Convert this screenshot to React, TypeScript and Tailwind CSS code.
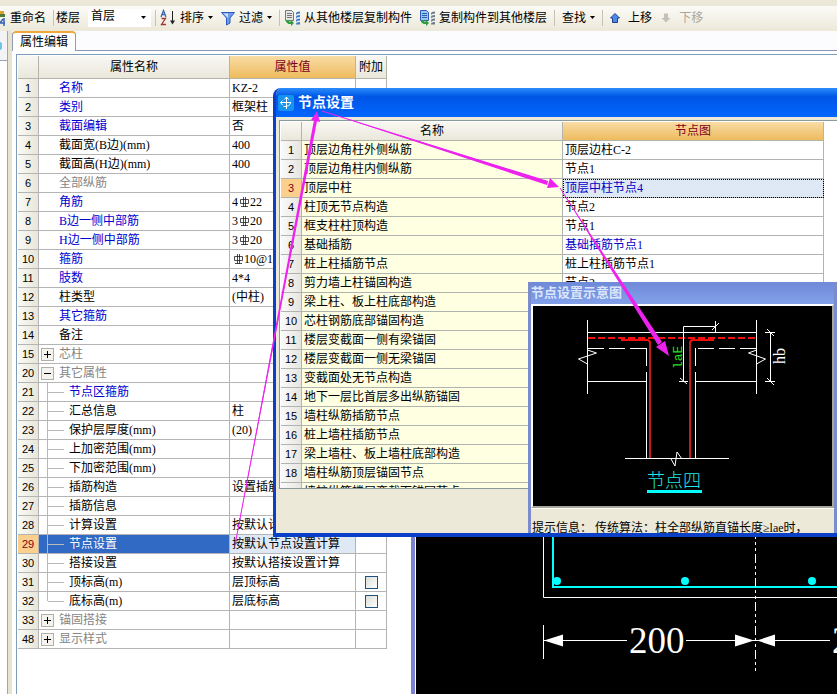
import type { ReactNode } from "react";
import clsx from "clsx";

type PropertyRow = {
  no: number;
  name: string;
  value?: ReactNode;
  tone?: "blue" | "gray";
  kind?: "group-open" | "group-closed" | "child" | "last-child";
  selected?: boolean;
  check?: boolean;
};

function Rebar() {
  return (
    <svg
      viewBox="0 0 12 12"
      className="inline-block size-3 align-[-2px]"
      fill="none"
      stroke="#222"
    >
      <path d="M5.500 1v10M7.500 1v10M2.500 3.500h8v4h-8zM3 10.500h7" strokeWidth="0.8" />
    </svg>
  );
}

const properties: PropertyRow[] = [
  { no: 1, name: "名称", value: "KZ-2", tone: "blue" },
  { no: 2, name: "类别", value: "框架柱", tone: "blue" },
  { no: 3, name: "截面编辑", value: "否", tone: "blue" },
  { no: 4, name: "截面宽(B边)(mm)", value: "400" },
  { no: 5, name: "截面高(H边)(mm)", value: "400" },
  { no: 6, name: "全部纵筋", tone: "gray" },
  { no: 7, name: "角筋", value: <>4<Rebar />22</>, tone: "blue" },
  { no: 8, name: "B边一侧中部筋", value: <>3<Rebar />20</>, tone: "blue" },
  { no: 9, name: "H边一侧中部筋", value: <>3<Rebar />20</>, tone: "blue" },
  { no: 10, name: "箍筋", value: <><Rebar />10@100</>, tone: "blue" },
  { no: 11, name: "肢数", value: "4*4", tone: "blue" },
  { no: 12, name: "柱类型", value: "(中柱)" },
  { no: 13, name: "其它箍筋", tone: "blue" },
  { no: 14, name: "备注" },
  { no: 15, name: "芯柱", tone: "gray", kind: "group-closed" },
  { no: 20, name: "其它属性", tone: "gray", kind: "group-open" },
  { no: 21, name: "节点区箍筋", tone: "blue", kind: "child" },
  { no: 22, name: "汇总信息", value: "柱", kind: "child" },
  { no: 23, name: "保护层厚度(mm)", value: "(20)", kind: "child" },
  { no: 24, name: "上加密范围(mm)", kind: "child" },
  { no: 25, name: "下加密范围(mm)", kind: "child" },
  { no: 26, name: "插筋构造", value: "设置插筋", kind: "child" },
  { no: 27, name: "插筋信息", kind: "child" },
  { no: 28, name: "计算设置", value: "按默认计算设置计算", kind: "child" },
  {
    no: 29,
    name: "节点设置",
    value: "按默认节点设置计算",
    kind: "child",
    selected: true,
  },
  { no: 30, name: "搭接设置", value: "按默认搭接设置计算", kind: "child" },
  { no: 31, name: "顶标高(m)", value: "层顶标高", kind: "child", check: true },
  {
    no: 32,
    name: "底标高(m)",
    value: "层底标高",
    kind: "last-child",
    check: true,
  },
  { no: 33, name: "锚固搭接", tone: "gray", kind: "group-closed" },
  { no: 48, name: "显示样式", tone: "gray", kind: "group-closed" },
];

const nodes: { name: string; value?: string; blue?: boolean }[] = [
  { name: "顶层边角柱外侧纵筋", value: "顶层边柱C-2" },
  { name: "顶层边角柱内侧纵筋", value: "节点1" },
  { name: "顶层中柱", value: "顶层中柱节点4", blue: true },
  { name: "柱顶无节点构造", value: "节点2" },
  { name: "框支柱柱顶构造", value: "节点1" },
  { name: "基础插筋", value: "基础插筋节点1", blue: true },
  { name: "桩上柱插筋节点", value: "桩上柱插筋节点1" },
  { name: "剪力墙上柱锚固构造", value: "节点2" },
  { name: "梁上柱、板上柱底部构造" },
  { name: "芯柱钢筋底部锚固构造" },
  { name: "楼层变截面一侧有梁锚固" },
  { name: "楼层变截面一侧无梁锚固" },
  { name: "变截面处无节点构造" },
  { name: "地下一层比首层多出纵筋锚固" },
  { name: "墙柱纵筋插筋节点" },
  { name: "桩上墙柱插筋节点" },
  { name: "梁上墙柱、板上墙柱底部构造" },
  { name: "墙柱纵筋顶层锚固节点" },
  { name: "墙柱纵筋楼层变截面锚固节点" },
];

function Separator() {
  return <span className="h-4 w-px shrink-0 bg-[#c5c2b4]" />;
}

function Caret() {
  return (
    <svg viewBox="0 0 5 3" className="h-[3px] w-[5px] shrink-0">
      <path d="M0 0h5L2.5 3z" />
    </svg>
  );
}

function CopyIcon({ blue }: { blue?: boolean }) {
  return (
    <svg viewBox="0 0 17 17" className="size-[17px] shrink-0">
      <path
        d="M1.5 1.5h6l2 2v8h-8z"
        fill={blue ? "#9cc4f4" : "#e4e4e4"}
        stroke={blue ? "#2c5fae" : "#777"}
      />
      <path
        d="M3 4.5h5M3 6.5h5M3 8.5h5"
        stroke={blue ? "#2c5fae" : "#777"}
      />
      <path
        d="M12 4.500q0-2 4-2v2q-4 0-4 2zM12 8q0-2 4-2v2q-4 0-4 2zM12 11.500q0-2 4-2v2q-4 0-4 2zM12 15q0-2 4-2v2.500h-4z"
        fill={blue ? "#6d7b8d" : "#3c7cd0"}
      />
      <path d="M2 11h3v1.500h2V11l3 3-3 3v-2H4.500L2 13z" fill="#2f9d3d" />
    </svg>
  );
}

function Toolbar() {
  const tool = "flex shrink-0 items-center whitespace-nowrap";
  return (
    <div className="flex h-[25px] items-center bg-linear-to-b from-[#fbfaf6] to-[#ece9da] pb-[2px]">
      <button className={tool}>
        <svg viewBox="0 0 6 16" className="h-4 w-[6px]">
          <path d="M0 1h4v3H0z" fill="#e0a02c" />
          <path d="M0 4h5v3H0z" fill="#4f7a3a" />
          <path d="M4 8v8M0 13l3-4M0 13h5" stroke="#3563b8" strokeWidth="1.500" />
        </svg>
        <span className="ml-1">重命名</span>
      </button>
      <span className="ml-[7px] flex">
        <Separator />
      </span>
      <label htmlFor="floor" className="ml-[2px] shrink-0">
        楼层
      </label>
      <div className="relative ml-2 flex shrink-0 items-center">
        <select
          id="floor"
          defaultValue="首层"
          className="h-[18px] w-[63px] appearance-none bg-white pb-1 pl-[3px] leading-[14px] outline-none"
        >
          <option>首层</option>
        </select>
        <span className="pointer-events-none absolute right-[5px]">
          <Caret />
        </span>
      </div>
      <span className="ml-1 flex">
        <Separator />
      </span>
      <button className={clsx(tool, "ml-1")}>
        <svg viewBox="0 0 16 17" className="h-[17px] w-4" fill="none">
          <path d="M1 8l2.500-6.500L6 8M2 5.500h3" stroke="#3a68b0" strokeWidth="1.300" />
          <path d="M1.500 9.500h4l-4 6h4.500" stroke="#a03434" strokeWidth="1.300" />
          <path d="M12.500 2v12" stroke="#222" />
          <path d="M10 11.500h5l-2.500 4z" fill="#222" />
        </svg>
        <span className="mr-1 ml-1">排序</span>
        <Caret />
      </button>
      <button className={clsx(tool, "ml-[7px]")}>
        <svg viewBox="0 0 16 16" className="size-4">
          <path
            d="M1.500 2.500h13L10 8v5l-3.500 2V8z"
            fill="#6f9cea"
            stroke="#2c5bc0"
          />
          <path d="M3.500 3.500H8L8 8z" fill="#cfe0ff" />
        </svg>
        <span className="mr-1 ml-[3px]">过滤</span>
        <Caret />
      </button>
      <span className="ml-[7px] flex">
        <Separator />
      </span>
      <button className={clsx(tool, "ml-1 gap-[3px]")}>
        <CopyIcon />
        从其他楼层复制构件
      </button>
      <button className={clsx(tool, "ml-[7px] gap-[3px]")}>
        <CopyIcon blue />
        复制构件到其他楼层
      </button>
      <span className="ml-[7px] flex">
        <Separator />
      </span>
      <button className={clsx(tool, "ml-[7px] gap-1")}>
        查找
        <Caret />
      </button>
      <span className="ml-[7px] flex">
        <Separator />
      </span>
      <button className={clsx(tool, "ml-[7px] gap-2")}>
        <svg viewBox="0 0 10 10" className="size-[10px]">
          <path d="M5 .500l4.500 4.500H7.500v4.500h-5V5H.500z" fill="#4f8ae6" stroke="#1d3f94" />
        </svg>
        上移
      </button>
      <button disabled className={clsx(tool, "ml-[9px] gap-2 text-[#aca899]")}>
        <svg viewBox="0 0 10 10" className="size-[10px]">
          <path d="M5 9.500L9.500 5H7V.500H3V5H.500z" fill="#c4c2b8" />
        </svg>
        下移
      </button>
    </div>
  );
}

function NameCell({ row }: { row: PropertyRow }) {
  const child = row.kind === "child" || row.kind === "last-child";
  const group = row.kind === "group-open" || row.kind === "group-closed";
  return (
    <div className="flex h-[18px] items-center">
      {child && (
        <>
          <span
            className={clsx(
              "ml-2 w-px self-start bg-[#b8b8b8]",
              row.kind === "child" ? "h-full" : "h-[9px]",
            )}
          />
          <span className="mr-[5px] h-px w-4 bg-[#b8b8b8]" />
        </>
      )}
      {group && (
        <button
          aria-label={row.name}
          className="mr-[5px] ml-[2px] flex size-[13px] items-center justify-center border border-[#b0b0a8] bg-[#f4f3ee]"
        >
          <svg viewBox="0 0 7 7" className="size-[7px]" stroke="black">
            <path d="M0 3.500h7" />
            {row.kind === "group-closed" && <path d="M3.500 0v7" />}
          </svg>
        </button>
      )}
      <span className={clsx(!child && !group && "pl-5")}>{row.name}</span>
    </div>
  );
}

function PropertyTable() {
  const line = "border-r border-b border-[#b4b4b4]";
  const head = "h-[23px] border-r border-b border-[#b4b4a8] p-0 font-normal";
  return (
    <table className="w-[369px] table-fixed border-separate border-spacing-0">
      <colgroup>
        <col className="w-[21px]" />
        <col className="w-[191px]" />
        <col className="w-[126px]" />
        <col className="w-[31px]" />
      </colgroup>
      <thead>
        <tr className="bg-linear-to-b from-[#f8f7f2] to-[#e9e7da]">
          <th className={head}></th>
          <th className={head}>属性名称</th>
          <th
            className={clsx(
              head,
              "bg-linear-to-b from-[#f9dca4] to-[#edbb5c] text-[#800020]",
            )}
          >
            属性值
          </th>
          <th className={head}>附加</th>
        </tr>
      </thead>
      <tbody>
        {properties.map((row) => (
          <tr key={row.no}>
            <td
              className={clsx(
                line,
                "p-0 text-center font-['Liberation_Sans',sans-serif] text-[11px]",
                row.selected
                  ? "bg-[#fbcf8c] text-[#800020]"
                  : "bg-linear-to-r from-[#fafaf6] to-[#e8e6d9]",
              )}
            >
              {row.no}
            </td>
            <td
              className={clsx(
                line,
                "p-0",
                row.selected && "bg-[#316ac5] text-white",
                row.tone === "blue" && "text-[#0000d0]",
                row.tone === "gray" && "text-[#858585]",
              )}
            >
              <NameCell row={row} />
            </td>
            <td
              className={clsx(
                line,
                "overflow-hidden p-0 pl-[2px] whitespace-nowrap",
                row.selected && "bg-[#dfe8f5]",
              )}
            >
              {row.value}
            </td>
            <td className={clsx(line, "p-0")}>
              {row.check && (
                <div className="flex h-[18px] items-center justify-center">
                  <input
                    type="checkbox"
                    aria-label={row.name}
                    className="size-[13px] appearance-none border border-[#1c5180] bg-linear-to-br from-[#dcdcd7] to-white"
                  />
                </div>
              )}
            </td>
          </tr>
        ))}
      </tbody>
    </table>
  );
}

function SectionCanvas() {
  return (
    <div className="mt-10 min-w-0 flex-1 border-l-4 border-[#7b82d2] bg-white pl-px">
      <div className="h-full overflow-hidden bg-black">
        <svg
          viewBox="416 95 421 599"
          className="h-[599px] w-[421px] overflow-visible"
          fill="none"
        >
          <path d="M543.500 500V597.500H1600" stroke="white" />
          <path d="M553 500V587H1600" stroke="#00ffff" strokeWidth="2" />
          <g fill="#00ffff">
            <circle cx="557" cy="581" r="4" />
            <circle cx="685" cy="581" r="4" />
            <circle cx="812" cy="581" r="4" />
          </g>
          <path
            d="M755.500 530V674"
            stroke="white"
            strokeDasharray="9 3 3 3 3 3"
          />
          <path
            d="M543.500 625v34M544 640.500h83M686 640.500h144"
            stroke="white"
          />
          <path
            d="M544 640.500l19-6v12zM754 640.500l-19-6v12zM757 640.500l18-6v12z"
            fill="white"
          />
          <g
            fill="white"
            className="font-['Liberation_Serif',serif] text-[37px]"
          >
            <text x="629" y="653">
              200
            </text>
            <text x="832" y="653">
              200
            </text>
          </g>
        </svg>
      </div>
    </div>
  );
}

function NodeDiagram() {
  return (
    <svg
      viewBox="533 305 298 200"
      className="h-[200px] w-[298px] bg-black"
      fill="none"
      stroke="white"
    >
      <path d="M587.500 319v74M756.500 319v74M587 331.500h170" />
      <path
        d="M588 337h168"
        stroke="#f01010"
        strokeWidth="2"
        strokeDasharray="7 3"
      />
      <path
        d="M588 347.500h59M756 347.500h-61"
        strokeDasharray="16 5"
      />
      <path d="M646.500 347v18M646.500 371v86M695.500 347v18M695.500 371v86" />
      <path d="M587 380.500h60M695 380.500h62" />
      <g stroke="#f01010" strokeWidth="2">
        <path d="M621 339h26q3 0 3 3M714 339h-21q-3 0-3 3" />
        <path d="M650 342v115M690 342v115" stroke="#c41c1c" />
      </g>
      <path d="M587.500 349l9 3-18 6 9 5M756.500 349l-8 3 17 6-9 5" />
      <path d="M683.500 381v-55.500h32M715.500 320v12M712 329l7-7M679 380.500h9M680 377l7 6" />
      <path d="M770.500 331v50M765 331.500h10M765 380.500h10M767 328l7 7M767 377l7 7" />
      <path d="M625 457.500h104M671 458l4 7 2-14 5 7" />
      <path d="M647 490.500h55" stroke="#00ffff" strokeWidth="3" />
      <g stroke="none">
        <text
          transform="translate(682 368) rotate(-90)"
          fill="#20e020"
          className="font-['Liberation_Mono',monospace] text-[13px]"
        >
          laE
        </text>
        <text
          transform="translate(785 363) rotate(-90)"
          fill="white"
          className="font-['Liberation_Serif',serif] text-[16px]"
        >
          hb
        </text>
        <text
          x="647"
          y="486"
          fill="#20e8e8"
          className="font-['Noto_Sans_CJK_SC',sans-serif] text-[18px] font-light"
        >
          节点四
        </text>
      </g>
    </svg>
  );
}

function DiagramWindow() {
  return (
    <section className="absolute top-[194px] left-[252px] w-[309px] border-x-[3px] border-[#7b8ccc] bg-[#ece9d8]">
      <h3 className="flex h-[22px] items-center bg-linear-to-b from-[#6f8ad8] to-[#82a0ea] text-[13px] font-bold text-[#dbe6fb]">
        节点设置示意图
      </h3>
      <div className="flex border-2 border-t-white border-r-[#a9a79b] border-b-[#a9a79b] border-l-white bg-black">
        <NodeDiagram />
      </div>
      <p className="h-[30px] border-t border-white pt-3 pl-px leading-[14px] whitespace-nowrap">
        提示信息： 传统算法：柱全部纵筋直锚长度≥lae时，
      </p>
    </section>
  );
}

function NodeTable() {
  const head =
    "h-[19px] border-r border-b border-[#b4b4a8] p-0 text-center font-normal";
  const cell = "h-[19px] border-r border-b border-[#b0b4b0] p-0";
  return (
    <table className="w-[543px] table-fixed border-separate border-spacing-0">
      <colgroup>
        <col className="w-[21px]" />
        <col className="w-[261px]" />
        <col className="w-[261px]" />
      </colgroup>
      <thead>
        <tr className="bg-linear-to-b from-[#f8f7f2] to-[#e9e7da]">
          <th className={head}></th>
          <th className={head}>名称</th>
          <th
            className={clsx(
              head,
              "bg-linear-to-b from-[#f9dca4] to-[#edbb5c] text-[#800020]",
            )}
          >
            节点图
          </th>
        </tr>
      </thead>
      <tbody>
        {nodes.map((node, idx) => {
          const active = idx === 2;
          return (
            <tr key={node.name}>
              <td
                className={clsx(
                  cell,
                  "text-center font-['Liberation_Sans',sans-serif] text-[11px]",
                  active
                    ? "bg-[#fbcf8c] text-[#800020]"
                    : "bg-linear-to-r from-[#fafafa] to-[#e6e5e0]",
                )}
              >
                {idx + 1}
              </td>
              <td className={clsx(cell, "bg-[#ffffe1] pl-[2px]")}>
                {node.name}
              </td>
              <td
                className={clsx(
                  cell,
                  "pl-[2px]",
                  node.blue && "text-[#0000c8]",
                  active &&
                    "bg-[#dfe8f5] outline-1 -outline-offset-1 outline-black outline-dotted",
                )}
              >
                {node.value}
              </td>
            </tr>
          );
        })}
      </tbody>
    </table>
  );
}

function NodeDialog() {
  return (
    <div
      role="dialog"
      aria-label="节点设置"
      className="absolute top-[88px] right-0 left-[273px] overflow-hidden rounded-tl-lg border-b-4 border-l-[3px] border-[#0a3fc8] bg-[#ece9d8]"
    >
      <header className="flex h-[29px] items-center gap-1 bg-linear-to-b from-[#2b8cfc] via-[#0055e5] via-30% to-[#0066ff] pl-[2px]">
        <svg viewBox="0 0 16 16" className="size-4" fill="none">
          <rect width="16" height="16" rx="2" fill="#1593ee" />
          <path
            d="M8.500 2v12M6.500 4.500l2-2.500 2 2.500M3 7.500h10M4.500 5.500L2.500 7.500l2 2.500M12.500 7.500q0 4-7 4"
            stroke="white"
          />
        </svg>
        <h2 className="text-[14px] font-bold text-white">节点设置</h2>
      </header>
      <div className="pt-[3px] pb-11 pl-[3px]">
        <div className="h-[369px] overflow-hidden border border-r-0 border-[#8a9a98] bg-white pt-px pl-px">
          <NodeTable />
        </div>
      </div>
      <DiagramWindow />
    </div>
  );
}

// callout arrows linking the property row, the dialog title and the diagram
function Callouts() {
  return (
    <svg
      viewBox="0 0 837 694"
      className="pointer-events-none absolute top-0 left-0 h-[694px] w-[837px]"
      fill="#ee22ee"
    >
      <path d="M235 545L314 120l3 1z" />
      <path d="M317 111l3 11-9-2z" />
      <path d="M322 111l226 70-1 4z" />
      <path d="M559 187l-12 1 3-10z" />
      <path d="M560 188l102 154-4 3z" />
      <path d="M669 356l-13-9 9-6z" />
      <path
        d="M235 545L315 124M322 111l226 71M560 188l100 156"
        fill="none"
        stroke="#ee22ee"
      />
    </svg>
  );
}

export default function App() {
  return (
    <div className="relative flex min-h-screen flex-col overflow-hidden bg-white font-['Liberation_Serif','Noto_Sans_CJK_SC',serif] text-[12px] leading-[18px] text-black">
      <div className="h-[6px] bg-[#ebe8d8]" />
      <Toolbar />
      <div className="flex flex-1">
        <div className="w-[7px] shrink-0">
          <div className="flex h-[30px] items-center border-b border-[#9aa5b4] bg-[#f3f3f6]">
            <span className="h-2 w-[2px] rounded-r bg-[#6fc3e8]" />
          </div>
        </div>
        <div className="w-[5px] shrink-0 border-l border-[#a8a69a] bg-[#e6e3d3]" />
        <main className="flex min-w-0 flex-1 flex-col">
          <div className="flex h-5 shrink-0 items-stretch bg-[#fcfcfe]">
            <button
              role="tab"
              aria-selected="true"
              className="w-16 shrink-0 rounded-t-sm border-t-2 border-r border-l border-t-[#f0a83c] border-r-[#919bab] border-l-[#919bab] bg-white leading-[16px]"
            >
              属性编辑
            </button>
            <div className="flex-1 border-b border-[#8a9bb0]" />
          </div>
          <div className="flex flex-1 pt-[3px] pl-1">
            <div className="flex min-w-0 flex-1 border-t border-l border-[#7f9db9]">
              <div className="w-[394px] shrink-0 pt-px pl-px">
                <PropertyTable />
              </div>
              <SectionCanvas />
            </div>
          </div>
        </main>
      </div>
      <NodeDialog />
      <Callouts />
    </div>
  );
}
